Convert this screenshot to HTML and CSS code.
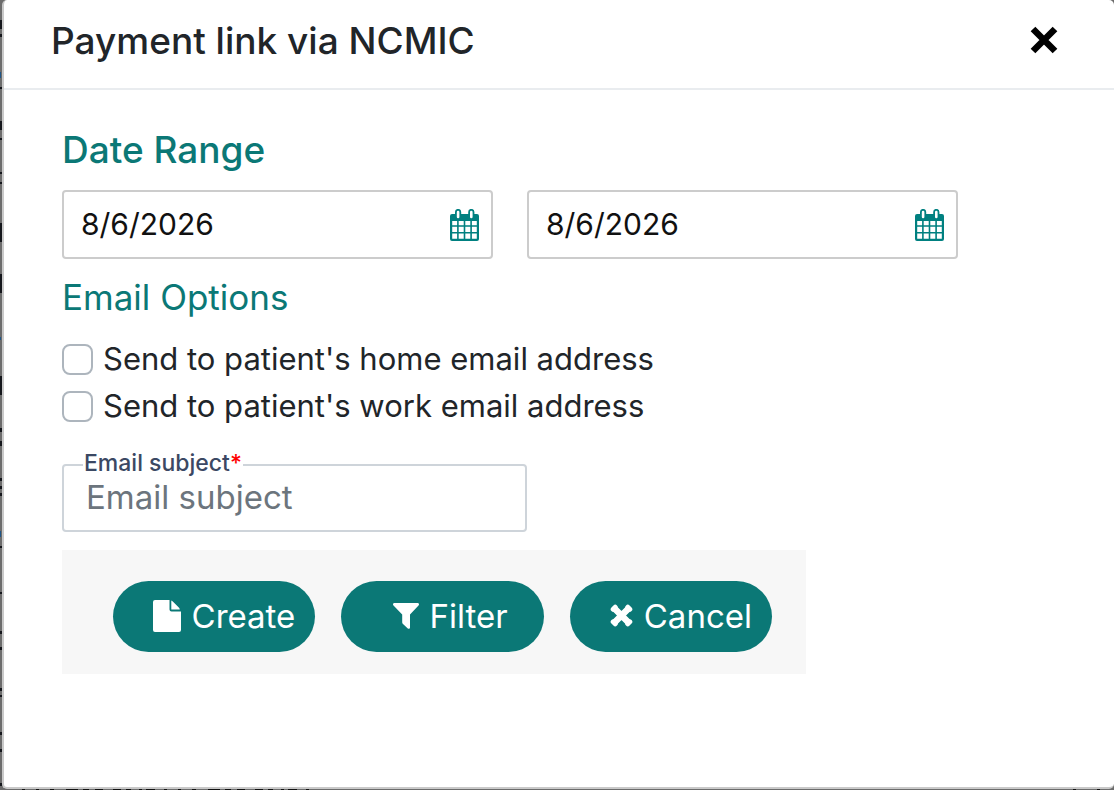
FILE: index.html
```html
<!DOCTYPE html>
<html lang="en">
<head>
<meta charset="utf-8">
<meta name="viewport" content="width=device-width, initial-scale=1">
<title>Payment link via NCMIC</title>
<link rel="stylesheet" href="styles.css">
</head>
<body>
<svg class="backdrop" aria-hidden="true" width="100%" height="100%">
  <path stroke="#15171c" stroke-width="2" d="M1 20v9M1 34v3M1 87v2M1 121v9M1 138v2M1 172v2M1 182v2M1 223v19M1 274v19M1 376v19M1 428v4M1 441v5M1 478v3M1 486v3M1 493v3M1 546v2M1 592v2M1 631v3M1 647v3M1 688v3M1 695v2M1 732v3M1 749v3M1 783v3"/>
  <path stroke="#1f5688" stroke-width="2" d="M0 72v6M0 337v3M0 531v6"/>
  <path stroke="#111" stroke-width="2" stroke-dasharray="3 11 3 11 4 12 12 5 6 6 8 10 8 5 5 8 3 4 9 9" d="M22 789.5H318M1073 789.5h8M1097 789.5h12"/>
</svg>
<section class="modal" role="dialog" aria-labelledby="dialog-title">
  <header class="modal-header">
    <h1 class="modal-title" id="dialog-title">Payment link via NCMIC</h1>
    <button class="close" type="button" aria-label="Close">
      <svg width="28" height="28" viewBox="0 0 28 28"><path d="M3 3 25 25M25 3 3 25" stroke="#000" stroke-width="6.600"/></svg>
    </button>
  </header>
  <form class="modal-body">
    <h2 class="section-title strong">Date Range</h2>
    <div class="dates">
      <div class="date-field">
        <input class="date-input" type="text" value="8/6/2026" aria-label="Start date">
        <button class="date-button" type="button" aria-label="Choose start date">
          <svg width="29" height="32" viewBox="0 0 29 32"><path fill="#008080" fill-rule="evenodd" d="M2 5h3V3a3 3 0 0 1 6.200 0v2h7V3a3 3 0 0 1 6.200 0v2H27a2 2 0 0 1 2 2v23a2 2 0 0 1-2 2H2a2 2 0 0 1-2-2V7a2 2 0 0 1 2-2zM6.800 3v5a1.200 1.200 0 0 0 2.600 0V3a1.200 1.200 0 0 0-2.600 0zM20 3v5a1.200 1.200 0 0 0 2.600 0V3A1.200 1.200 0 0 0 20 3zM2.200 12v4.200h4.900V12zM8.700 12v4.200h5V12zM15.300 12v4.200h5V12zM21.900 12v4.200h4.900V12zM2.200 17.800v5.100h4.900v-5.100zM8.700 17.800v5.100h5v-5.100zM15.300 17.800v5.100h5v-5.100zM21.900 17.800v5.100h4.900v-5.100zM2.200 24.500v5.200h4.900v-5.200zM8.700 24.500v5.200h5v-5.200zM15.300 24.500v5.200h5v-5.200zM21.900 24.500v5.200h4.900v-5.200z"/></svg>
        </button>
      </div>
      <div class="date-field">
        <input class="date-input" type="text" value="8/6/2026" aria-label="End date">
        <button class="date-button" type="button" aria-label="Choose end date">
          <svg width="29" height="32" viewBox="0 0 29 32"><path fill="#008080" fill-rule="evenodd" d="M2 5h3V3a3 3 0 0 1 6.200 0v2h7V3a3 3 0 0 1 6.200 0v2H27a2 2 0 0 1 2 2v23a2 2 0 0 1-2 2H2a2 2 0 0 1-2-2V7a2 2 0 0 1 2-2zM6.800 3v5a1.200 1.200 0 0 0 2.600 0V3a1.200 1.200 0 0 0-2.600 0zM20 3v5a1.200 1.200 0 0 0 2.600 0V3A1.200 1.200 0 0 0 20 3zM2.200 12v4.200h4.900V12zM8.700 12v4.200h5V12zM15.300 12v4.200h5V12zM21.900 12v4.200h4.900V12zM2.200 17.800v5.100h4.900v-5.100zM8.700 17.800v5.100h5v-5.100zM15.300 17.800v5.100h5v-5.100zM21.900 17.800v5.100h4.900v-5.100zM2.200 24.500v5.200h4.900v-5.200zM8.700 24.500v5.200h5v-5.200zM15.300 24.500v5.200h5v-5.200zM21.900 24.500v5.200h4.900v-5.200z"/></svg>
        </button>
      </div>
    </div>
    <h2 class="section-title">Email Options</h2>
    <div class="options">
      <label class="option"><input class="check" type="checkbox"><span>Send to patient's home email address</span></label>
      <label class="option"><input class="check" type="checkbox"><span>Send to patient's work email address</span></label>
    </div>
    <div class="subject">
      <label class="subject-label" for="subject">Email subject<span class="required">*</span></label>
      <input class="subject-input" id="subject" type="text" placeholder="Email subject">
    </div>
    <div class="actions">
      <button class="action" type="button">
        <svg width="28" height="32" viewBox="0 0 28 32"><path fill="#fff" d="M2 0h14.500v9.500a2 2 0 0 0 2 2H28V30a2 2 0 0 1-2 2H2a2 2 0 0 1-2-2V2a2 2 0 0 1 2-2zM18.300 .5c.7.200 1 .6 1.500 1l6 6c.5.500.8 1 1 2h-8.500z"/></svg>
        Create
      </button>
      <button class="action filter" type="button">
        <svg width="26" height="26" viewBox="0 0 26 26"><path fill="#fff" d="M1.500 0h23c1.400 0 2 1.500 1 2.500L17 11.500V24.500c0 1.200-1.200 1.800-2.200 1L10 21c-.6-.6-.8-1-.8-1.800v-7.700L.5 2.500C-.5 1.500.1 0 1.500 0z"/></svg>
        Filter
      </button>
      <button class="action" type="button">
        <svg width="23" height="23" viewBox="0 0 23 23"><path d="M4.500 4.500 18.500 18.500M18.500 4.500 4.500 18.500" fill="none" stroke="#fff" stroke-width="6.500"/><path d="M3.200 5.200 5.200 3.200M17.800 3.200l2 2M3.200 17.800l2 2M17.800 19.800l2-2" stroke="#fff" stroke-width="5" stroke-linecap="round"/></svg>
        Cancel
      </button>
    </div>
  </form>
</section>
</body>
</html>
```
FILE: styles.css
```css
* {
  box-sizing: border-box;
}

body {
  margin: 0;
  min-height: 100vh;
  padding: 0 0 1px 2px;
  display: flex;
  background: #6c6c6c;
  color: #212529;
  font-family: Inter, sans-serif;
}

button,
input {
  font: inherit;
}

button {
  border: 0;
  padding: 0;
  background: none;
  cursor: pointer;
}

svg {
  display: block;
  flex: none;
}

.backdrop {
  position: absolute;
  inset: 0;
}

.modal {
  position: relative;
  flex: 1;
  min-width: 0;
  background: #fff;
  border: solid #c9c9c9;
  border-width: 0 0 2px 2px;
  border-radius: 5px;
}

.modal-header {
  display: flex;
  align-items: center;
  justify-content: space-between;
  padding: 14px 56px 20px 47px;
  border-bottom: 2px solid #e9ecef;
}

.close {
  padding-bottom: 2px;
}

.modal-title {
  margin: 0;
  font-size: 37px;
  line-height: 54px;
  font-weight: 500;
}

.modal-body {
  padding: 32px 58px;
}

.section-title {
  margin: 0;
  color: #0b7876;
  font-size: 35px;
  line-height: 56px;
  font-weight: 400;
}

.section-title.strong {
  font-size: 37px;
  font-weight: 500;
}

.dates {
  display: flex;
  gap: 34px;
  padding: 12px 0 10px;
}

.date-field {
  position: relative;
  flex: 0 1 431px;
}

.date-input {
  display: block;
  width: 100%;
  height: 69px;
  padding: 0 60px 2px 17px;
  border: 2px solid #ccc;
  border-radius: 4px;
  color: #111;
  font-size: 30px;
}

.date-button {
  position: absolute;
  right: 14px;
  top: 19px;
}

.options {
  display: grid;
  gap: 3px;
  padding: 12px 0 36px;
}

.option {
  display: flex;
  align-items: center;
  gap: 10px;
  font-size: 31px;
  line-height: 44px;
}

.check {
  appearance: none;
  flex: none;
  width: 31px;
  height: 31px;
  margin: 0;
  border: 2px solid #adb5bd;
  border-radius: 8px;
  background: #fff;
}

.subject {
  position: relative;
  max-width: 465px;
}

.subject-label {
  position: absolute;
  left: 21px;
  top: -16px;
  padding: 0 1px;
  background: #fff;
  color: #3b4863;
  font-size: 23px;
  line-height: 30px;
  font-weight: 500;
}

.required {
  color: #f00;
}

.subject-input {
  display: block;
  width: 100%;
  height: 68px;
  padding: 0 22px 2px;
  border: 2px solid #ced4da;
  border-radius: 4px;
  font-size: 33px;
}

.subject-input::placeholder {
  color: #6c757d;
  opacity: 1;
}

.actions {
  display: grid;
  grid-template-columns: repeat(3, 1fr);
  gap: 26px;
  max-width: 744px;
  margin-top: 18px;
  padding: 31px 34px 22px 51px;
  background: #f7f7f7;
}

.action {
  display: flex;
  align-items: center;
  justify-content: flex-end;
  gap: 11px;
  height: 71px;
  padding: 0 20px 2px 0;
  border-radius: 36px;
  background: #0b7876;
  color: #fff;
  font-size: 33px;
}

.action.filter {
  padding-right: 36px;
}
```
